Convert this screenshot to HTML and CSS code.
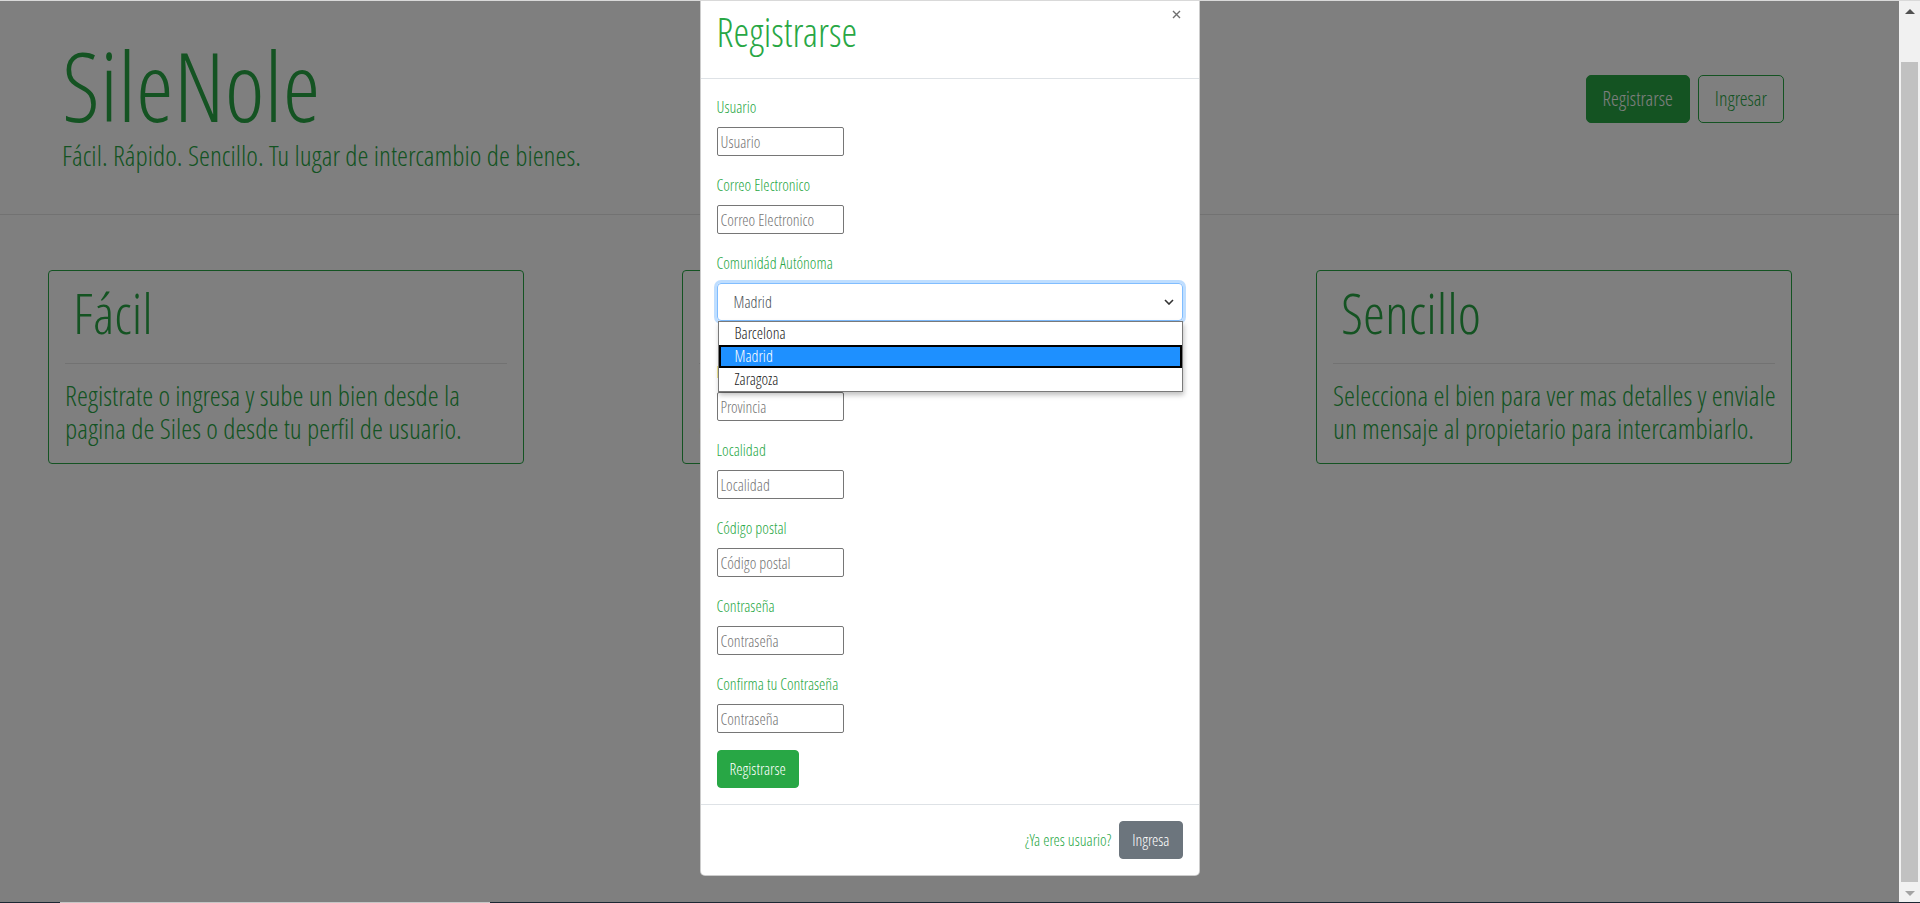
FILE: index.html
```html
<!DOCTYPE html>
<html lang="es">
<head>
<meta charset="utf-8">
<title>SileNole</title>
<link rel="stylesheet" href="styles.css">
</head>
<body>
<div class="topline"></div>
<div class="window">
  <div class="viewport">
    <div class="page">
      <header class="site-header">
        <div class="brand">
          <h1 class="brand-title">SileNole</h1>
          <p class="brand-lead">Fácil. Rápido. Sencillo. Tu lugar de intercambio de bienes.</p>
        </div>
        <div class="header-actions">
          <button class="btn btn-lg btn-success">Registrarse</button>
          <button class="btn btn-lg btn-outline">Ingresar</button>
        </div>
      </header>
      <section class="features">
        <article class="card">
          <h2 class="card-title">Fácil</h2>
          <hr class="card-rule">
          <p class="card-text">Registrate o ingresa y sube un bien desde la pagina de Siles o desde tu perfil de usuario.</p>
        </article>
        <article class="card">
          <h2 class="card-title">Rápido</h2>
          <hr class="card-rule">
          <p class="card-text">Busca entre todos los bienes disponibles y encuentra lo que necesitas en segundos.</p>
        </article>
        <article class="card">
          <h2 class="card-title">Sencillo</h2>
          <hr class="card-rule">
          <p class="card-text">Selecciona el bien para ver mas detalles y enviale un mensaje al propietario para intercambiarlo.</p>
        </article>
      </section>
    </div>

    <div class="backdrop"></div>

    <div class="modal-layer">
      <div class="modal-content">
        <div class="modal-header">
          <h3 class="modal-title">Registrarse</h3>
          <button class="close" type="button" aria-label="Cerrar">
            <svg width="9" height="9" viewBox="0 0 9 9"><path d="M1 1 L8 8 M8 1 L1 8" stroke="#6f6f6f" stroke-width="1.4" fill="none"/></svg>
          </button>
        </div>
        <form class="modal-body">
          <div class="form-group">
            <label class="form-label">Usuario</label>
            <input class="field" type="text" placeholder="Usuario">
          </div>
          <div class="form-group">
            <label class="form-label">Correo Electronico</label>
            <input class="field" type="text" placeholder="Correo Electronico">
          </div>
          <div class="form-group select-group">
            <label class="form-label">Comunidád Autónoma</label>
            <div class="select-wrap">
              <div class="select">
                <span>Madrid</span>
                <svg class="chev" width="10" height="6" viewBox="0 0 10 6"><path d="M1 1 L5 5 L9 1" stroke="#333" stroke-width="1.6" fill="none"/></svg>
              </div>
              <ul class="dropdown">
                <li class="option">Barcelona</li>
                <li class="option selected">Madrid</li>
                <li class="option">Zaragoza</li>
              </ul>
            </div>
          </div>
          <div class="form-group">
            <label class="form-label">Provincia</label>
            <input class="field" type="text" placeholder="Provincia">
          </div>
          <div class="form-group">
            <label class="form-label">Localidad</label>
            <input class="field" type="text" placeholder="Localidad">
          </div>
          <div class="form-group">
            <label class="form-label">Código postal</label>
            <input class="field" type="text" placeholder="Código postal">
          </div>
          <div class="form-group">
            <label class="form-label">Contraseña</label>
            <input class="field" type="password" placeholder="Contraseña">
          </div>
          <div class="form-group">
            <label class="form-label">Confirma tu Contraseña</label>
            <input class="field" type="password" placeholder="Contraseña">
          </div>
          <button class="btn btn-success submit" type="button">Registrarse</button>
        </form>
        <div class="modal-footer">
          <span class="footer-text">¿Ya eres usuario?</span>
          <button class="btn btn-secondary" type="button">Ingresa</button>
        </div>
      </div>
    </div>
  </div>
  <div class="scrollbar">
    <div class="sb-arrow"><span class="tri-up"></span></div>
    <div class="sb-thumb"></div>
    <div class="sb-arrow sb-bottom"><span class="tri-down"></span></div>
  </div>
</div>
<div class="taskbar"><span class="tb-seg"></span></div>
</body>
</html>
```

FILE: styles.css
```css
* { box-sizing: border-box; }

html, body { margin: 0; padding: 0; }

body {
  width: 1920px;
  height: 903px;
  overflow: hidden;
  display: flex;
  flex-direction: column;
  font-family: "Open Sans Condensed Light", "Open Sans Condensed", "Open Sans", "Liberation Sans Narrow", sans-serif;
  font-stretch: condensed;
  font-weight: 300;
  font-size: 16px;
  line-height: 1.5;
  color: #28a745;
  background: #fff;
}

button, input { font: inherit; }

.topline { height: 1px; flex: none; background: #d9d9d9; }

.window { flex: 1; display: flex; min-height: 0; }

.viewport { position: relative; flex: 1; overflow: hidden; background: #fff; }

/* ---------- page ---------- */
.site-header {
  display: flex;
  justify-content: space-between;
  align-items: flex-start;
  padding: 36px 115px 41px 62px;
  border-bottom: 1px solid rgba(0,0,0,.1);
}

.brand-title {
  margin: 0;
  font-size: 96px;
  line-height: 96px;
  font-weight: 300;
}

.brand-lead {
  margin: 6px 0 0;
  font-size: 28px;
  line-height: 1.2;
}

.header-actions {
  display: flex;
  gap: 8px;
  margin-top: 38px;
}

.btn {
  display: inline-block;
  border: 1px solid transparent;
  border-radius: 4px;
  padding: 6px 12px;
  font-size: 16px;
  line-height: 24px;
  font-weight: 300;
  cursor: pointer;
}

.btn-lg {
  padding: 8px 16px;
  font-size: 20px;
  line-height: 30px;
  border-radius: 5px;
}

.btn-success { background: #28a745; border-color: #28a745; color: #fff; }
.btn-outline { background: transparent; border-color: #28a745; color: #28a745; }
.btn-secondary { background: #6c757d; border-color: #6c757d; color: #fff; }

.features {
  display: grid;
  grid-template-columns: repeat(3, 476px);
  column-gap: 158px;
  padding: 55px 0 0 48px;
}

.card {
  border: 1px solid #28a745;
  border-radius: 4px;
  padding: 8px 10px 18px 16px;
}

.card-title {
  margin: 0;
  padding-left: 8px;
  font-size: 56px;
  line-height: 1.2;
  font-weight: 300;
}

.card-rule {
  margin: 17px 6px 15px 0;
  border: 0;
  border-top: 1px solid rgba(0,0,0,.1);
}

.card-text {
  margin: 0;
  font-size: 28px;
  line-height: 33px;
}

/* ---------- overlay ---------- */
.backdrop {
  position: absolute;
  inset: 0;
  background: rgba(0,0,0,.5);
}

.modal-layer {
  position: absolute;
  inset: 0;
  display: flex;
  justify-content: center;
  align-items: flex-start;
}

.modal-content {
  width: 500px;
  margin-top: -16px;
  background: #fff;
  border: 1px solid rgba(0,0,0,.2);
  border-radius: 5px;
}

.modal-header {
  display: flex;
  align-items: flex-start;
  padding: 16px;
  border-bottom: 1px solid #dee2e6;
}

.modal-title {
  margin: 0;
  font-size: 40px;
  line-height: 60px;
  font-weight: 300;
  color: #28a745;
}

.close {
  margin: 0 -2px 0 auto;
  padding: 0;
  width: 16px;
  height: 25px;
  border: 0;
  background: transparent;
  display: flex;
  align-items: center;
  justify-content: center;
}

.modal-body { padding: 16px 16px 16px; margin: 0; }

.form-group { margin-bottom: 17px; }

.form-label {
  display: block;
  margin-bottom: 8px;
  font-size: 16px;
  line-height: 24px;
  color: #28a745;
}

.field {
  display: block;
  width: 127px;
  height: 29px;
  margin-top: 1px;
  padding: 1px 3px;
  border: 1px solid #767676;
  border-radius: 2px;
  background: #fff;
  color: #222;
  font-size: 16px;
  line-height: 24px;
  outline: none;
}

.field::placeholder { color: #757575; opacity: 1; }

.select-group { margin-bottom: 39px; }

.select-wrap { position: relative; }

.select {
  height: 38px;
  display: flex;
  align-items: center;
  justify-content: space-between;
  padding: 0 8px 0 16px;
  border: 1px solid #80bdff;
  border-radius: 4px;
  box-shadow: 0 0 0 3px rgba(0,123,255,.25);
  color: #495057;
  font-size: 16px;
}

.chev { display: block; }

.dropdown {
  position: absolute;
  top: 38px;
  left: 1px;
  right: 0;
  margin: 0;
  padding: 0;
  list-style: none;
  background: #fff;
  border: 1px solid #7a7a7a;
  box-shadow: 1px 3px 5px rgba(0,0,0,.25);
  z-index: 2;
}

.option {
  height: 23px;
  padding-left: 16px;
  font-size: 16px;
  line-height: 23px;
  color: #222;
}

.option.selected {
  background: #1e90ff;
  color: #fff;
  box-shadow: inset 0 0 0 2px #000;
}

.submit { margin-top: 0; }

.modal-footer {
  display: flex;
  justify-content: flex-end;
  align-items: center;
  padding: 12px;
  border-top: 1px solid #dee2e6;
}

.modal-footer > * { margin: 4px; }

.footer-text { color: #28a745; font-size: 16px; }

/* ---------- scrollbar ---------- */
.scrollbar {
  width: 21px;
  flex: none;
  display: flex;
  flex-direction: column;
  background: #f1f1f1;
  padding: 0 2px;
}

.sb-arrow {
  height: 21px;
  display: flex;
  align-items: center;
  justify-content: center;
}

.sb-bottom { margin-top: auto; height: 17px; }

.tri-up {
  width: 0; height: 0;
  border-left: 5px solid transparent;
  border-right: 5px solid transparent;
  border-bottom: 5px solid #505050;
}

.tri-down {
  width: 0; height: 0;
  border-left: 5px solid transparent;
  border-right: 5px solid transparent;
  border-top: 5px solid #a3a3a3;
}

.sb-thumb {
  margin-top: 40px;
  height: 820px;
  background: #c1c1c1;
}

/* ---------- taskbar edge ---------- */
.taskbar {
  height: 1px;
  flex: none;
  background: #1c2733;
  padding-left: 60px;
  display: flex;
}

.tb-seg { width: 430px; background: #c6c6c6; }
```
